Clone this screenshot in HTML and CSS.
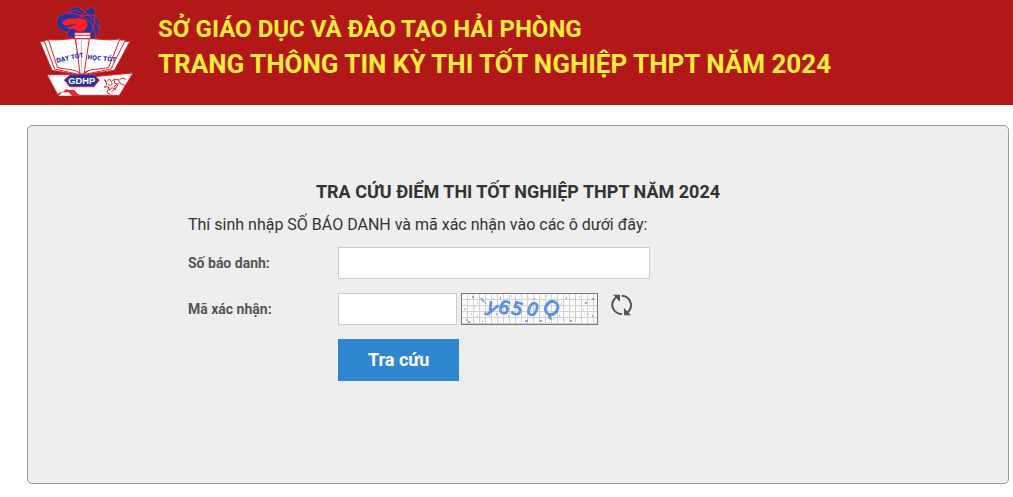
FILE: index.html
```html
<!DOCTYPE html>
<html lang="vi">
<head>
    <meta charset="UTF-8">
    <meta name="viewport" content="width=device-width, initial-scale=1.0">
    <title>Tra cứu điểm thi tốt nghiệp THPT năm 2024</title>
    <link rel="stylesheet" href="styles.css">
</head>
<body>
<header class="header">
    <svg class="logo" viewBox="24 15 288 273" role="img" aria-label="GDHP">
        <!-- atom and flame -->
        <path d="M81 70C78 50 92 40 114 40C118 26 132 17 146 22C154 26 158 32 162 38C174 24 188 17 192 24C196 32 196 40 194 48C206 56 210 66 208 80C206 94 204 106 196 114L182 122V104H134V114L116 112C112 108 112 104 113 98C94 94 84 86 81 70Z" fill="#2432a0" stroke="#e52733" stroke-width="2"/>
        <path d="M96 68C102 58 118 54 136 56C146 54 158 54 166 60C176 68 174 84 162 92C152 98 140 94 132 86C122 88 114 86 108 80C116 80 130 80 140 74C132 70 124 72 116 76C108 78 100 76 96 68Z" fill="#ff1f26"/>
        <path d="M114 40C132 38 156 46 176 62C190 74 198 94 196 114M118 36C128 30 144 30 154 40M162 38C146 56 132 72 113 98M194 48C184 44 170 44 156 48M194 48C196 68 190 86 182 100M146 22C166 34 186 52 208 84" fill="none" stroke="#e52733" stroke-width="3"/>
        <!-- open book -->
        <g fill="#fff" stroke="#e0202c" stroke-width="3" stroke-linejoin="round">
            <path d="M29 124L66 211L146 224L132 205L45 124Z"/>
            <path d="M42 121L74 207L150 224L140 206L56 120Z"/>
            <path d="M55 118C81 123 103 116 136 116L153 222C132 204 106 210 82 202Z"/>
            <path d="M300 124L253 211L164 224L180 207L278 124Z"/>
            <path d="M286 120L243 207L160 224L180 208L268 120Z"/>
            <path d="M270 116C239 124 211 116 176 116L157 222C182 202 211 210 236 202Z"/>
            <path d="M137 116H178L162 222H150Z"/>
            <path d="M134 98H181V116H134Z"/>
            <path d="M134 106H181"/>
        </g>
        <path d="M154 120V220" stroke="#f7a9ab" stroke-width="3"/>
        <g class="logo-motto">
            <text x="80" y="188" transform="rotate(-12 80 188)">DẠY TỐT</text>
            <text x="172" y="178" transform="rotate(5 172 178)">HỌC TỐT</text>
        </g>
        <!-- ribbon -->
        <path d="M51 224H128L190 230L309 219L268 286H84Z" fill="#fff" stroke="#e52733" stroke-width="3"/>
        <path d="M80 285C88 274 98 280 104 271C108 263 116 272 124 270C136 266 137 280 151 286Z" fill="#e52733"/>
        <path d="M86 287L96 277H116L126 287Z" fill="#fff"/>
        <g fill="none" stroke="#e52733" stroke-width="3">
            <path d="M223 239L230 245L239 236L244 245L253 237L254 250L263 252L253 259L258 269L246 263L239 271L235 260L223 262L231 252Z"/>
            <path d="M244 247C252 253 238 261 234 251M254 237L268 240L276 234L288 238M264 240L272 252L282 254L286 266M267 250L257 265L244 276M237 263L231 278L242 284"/>
        </g>
        <path d="M122 223H190L208 240L192 260H119L103 240Z" fill="#2432a0" stroke="#e52733" stroke-width="3"/>
        <text class="logo-name" x="155" y="251" text-anchor="middle">GDHP</text>
    </svg>
    <div class="header-text">
        <div class="department">SỞ GIÁO DỤC VÀ ĐÀO TẠO HẢI PHÒNG</div>
        <div class="site-name">TRANG THÔNG TIN KỲ THI TỐT NGHIỆP THPT NĂM 2024</div>
    </div>
</header>

<main class="panel">
    <form class="lookup">
        <h1>TRA CỨU ĐIỂM THI TỐT NGHIỆP THPT NĂM 2024</h1>
        <p>Thí sinh nhập SỐ BÁO DANH và mã xác nhận vào các ô dưới đây:</p>
        <div class="row">
            <label for="sbd">Số báo danh:</label>
            <input type="text" id="sbd" class="input-sbd">
        </div>
        <div class="row">
            <label for="captcha">Mã xác nhận:</label>
            <input type="text" id="captcha" class="input-captcha">
            <svg class="captcha" viewBox="0 0 135 30" role="img" aria-label="Mã xác nhận">
                <defs>
                    <pattern id="grid" x="0" y="0" width="6" height="6" patternUnits="userSpaceOnUse">
                        <path d="M0 5.5H6M5.5 0V6" stroke="#d4d2d2" fill="none"/>
                    </pattern>
                </defs>
                <rect width="135" height="30" fill="#fdfbfb"/>
                <rect width="135" height="30" fill="url(#grid)"/>
                <path d="M10 3h2M4 26h1M6 28h2M19 4l3 4M23 9h1M38 4h1M72 5h1M123 9h2M130 5h2M130 22h1M108 27h2M78 27h2M63 27h3M34 20h1M104 4h1" stroke="#7ea4ee" stroke-width="2"/>
                <path d="M15 9h1M31 5h1M45 4h1M66 5h1M89 8h1M117 3h1M107 13h1M121 16h1M97 22h1M102 26h1M87 28h1M70 24h1M46 22h1M20 27h1M9 20h1M128 12h1M2 15h2M12 13h1M15 22h1M27 22h1M49 2h1M84 2h1M99 10h1M113 16h1M126 20h1M91 25h1M41 27h1M53 25h1M119 26h1M94 6h1" stroke="#b9ccf5" stroke-width="2"/>
                <g class="captcha-text">
                    <text x="23" y="16" transform="rotate(28 23 16)">y</text>
                    <text x="35" y="18" transform="rotate(16 35 18)">6</text>
                    <text x="48" y="19" transform="rotate(18 48 19)">5</text>
                    <text x="63" y="19" transform="rotate(22 63 19)">0</text>
                    <text class="captcha-wide" x="79" y="16" transform="rotate(32 79 16)">Q</text>
                </g>
            </svg>
            <button type="button" class="refresh" aria-label="Đổi mã xác nhận">
                <svg viewBox="0 0 66 66">
                    <g fill="none" stroke="#555550" stroke-width="6">
                        <path d="M17 9C2 19 0 36 9 48C15 56 24 60 33 60"/>
                        <path d="M32 5C46 4 58 16 60 30C61 42 56 50 49 56"/>
                    </g>
                    <path d="M6 2H27V23ZM39 42V64H60Z" fill="#555550"/>
                </svg>
            </button>
        </div>
        <button type="submit" class="submit">Tra cứu</button>
    </form>
</main>
</body>
</html>
```
FILE: styles.css
```css
* {
    box-sizing: border-box;
}
body {
    margin: 0;
    background: #fff;
    color: #333;
    font-family: Roboto, "Liberation Sans", sans-serif;
}
.header {
    display: flex;
    align-items: flex-start;
    gap: 24px;
    padding: 5px 38px 9px;
    background: #b31818;
}
.logo {
    flex: none;
    width: 96px;
    height: 91px;
}
.logo-motto {
    fill: #2432a0;
    font-family: "Liberation Sans Narrow", "DejaVu Sans Condensed", sans-serif;
    font-size: 19px;
    font-weight: bold;
}
.logo-name {
    fill: #fff;
    font-family: "Liberation Sans", sans-serif;
    font-size: 28px;
    font-weight: bold;
}
.header-text {
    padding-top: 7px;
    color: #ffeb3b;
    font-weight: bold;
    line-height: 35px;
}
.department {
    font-size: 24px;
}
.site-name {
    font-size: 26px;
}
.panel {
    min-height: 359px;
    margin: 20px 4px 13px 27px;
    padding: 50px 20px;
    background: #eee;
    border: 1px solid #999;
    border-radius: 5px;
}
.lookup {
    max-width: 660px;
    margin: 0 auto;
}
h1 {
    margin: 0;
    font-size: 18px;
    font-weight: bold;
    line-height: 32px;
    text-align: center;
}
p {
    margin: 0 0 5px;
    font-size: 16px;
    line-height: 34px;
}
.row {
    display: flex;
    align-items: center;
    height: 32px;
    margin-bottom: 14px;
}
label {
    width: 150px;
    color: #555;
    font-size: 14px;
    font-weight: bold;
}
input {
    height: 32px;
    padding: 4px 8px;
    border: 1px solid #ccc;
    background: #fff;
    font: inherit;
}
.input-sbd {
    width: 312px;
}
.input-captcha {
    width: 119px;
}
.captcha {
    width: 137px;
    height: 32px;
    margin-left: 4px;
    border: 1px solid #777;
}
.captcha-text {
    fill: #5c8fe8;
    font-family: "DejaVu Sans", sans-serif;
    font-size: 18px;
    stroke: #5c8fe8;
    stroke-width: 1px;
}
.captcha-wide {
    font-size: 20px;
}
.refresh {
    align-self: flex-start;
    width: 22px;
    height: 24px;
    margin-left: 13px;
    padding: 0;
    border: 0;
    background: none;
    cursor: pointer;
}
.refresh svg {
    display: block;
    width: 22px;
    height: 24px;
}
.submit {
    height: 42px;
    margin-left: 150px;
    padding: 0 30px 2px;
    border: 0;
    background: #2f87d0;
    color: #fff;
    font-family: inherit;
    font-size: 18px;
    font-weight: bold;
    cursor: pointer;
}
```
